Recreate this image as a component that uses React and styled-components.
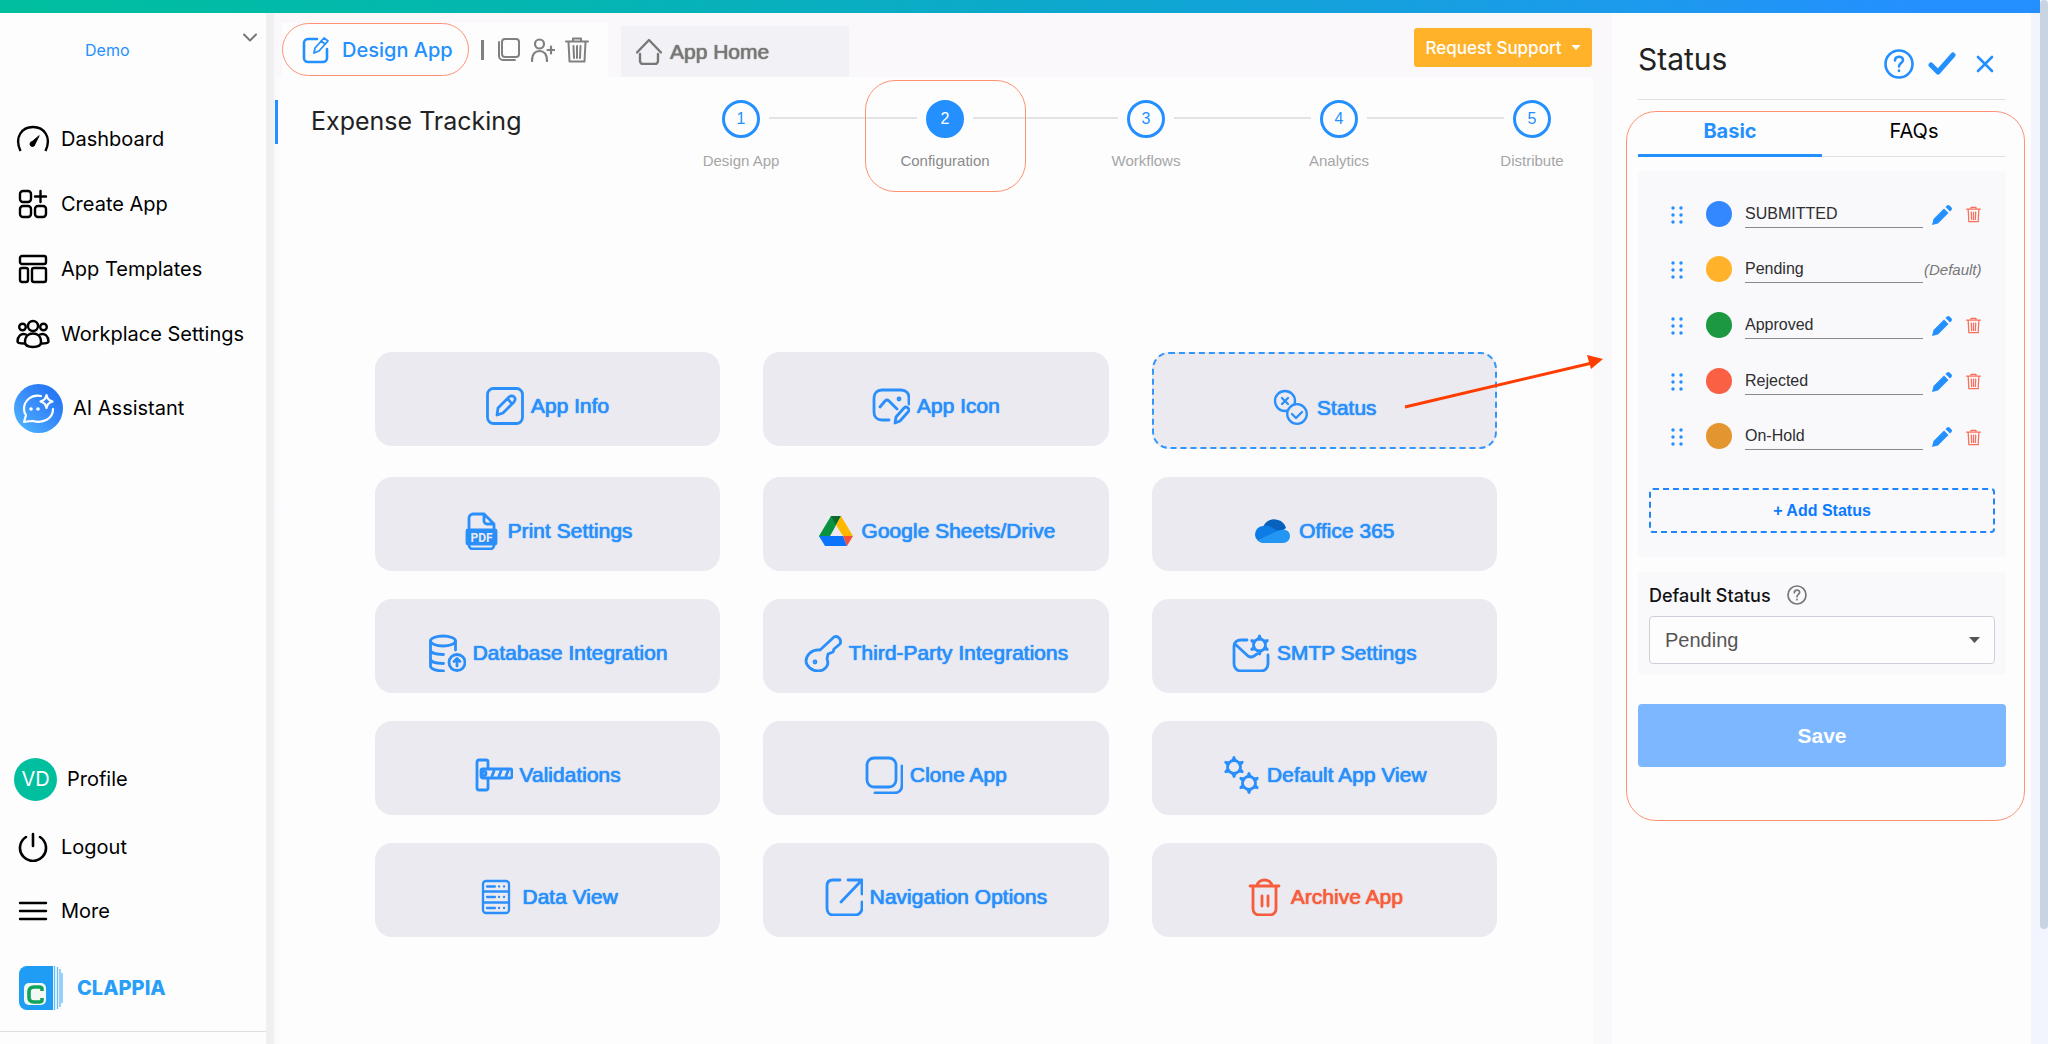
import React from "react";
import styled, { createGlobalStyle, css } from "styled-components";

const blue = "#2490ff";
const accent = "#ff9275";
const ui = `Inter, "Liberation Sans", sans-serif`;
const helv = `"Liberation Sans", Arial, sans-serif`;

const Global = createGlobalStyle`
  *, *::before, *::after { box-sizing: border-box; }
  body { margin: 0; background: #fdfdfe; font-family: ${ui}; color: #000; }
  button, input, select { font: inherit; color: inherit; margin: 0; }
  button { background: none; border: 0; padding: 0; cursor: pointer; }
  a { color: inherit; text-decoration: none; }
  svg { display: block; }
  ul, ol { list-style: none; margin: 0; padding: 0; }
  h1, h2 { margin: 0; font-weight: 400; }
`;

/* ---------- shell ---------- */
const Page = styled.div`
  display: flex;
  min-height: 100vh;
  background: #f2f5fd;
`;
const Shell = styled.div`
  flex: 1;
  min-width: 0;
  display: flex;
  flex-direction: column;
`;
const TopBar = styled.div`
  height: 13px;
  background: linear-gradient(90deg, #00bf9f 0%, #04b5b2 28%, #10a5d4 58%, #1c9aec 80%, #2490ff 94%);
`;
const Columns = styled.div`
  flex: 1;
  display: flex;
  padding-right: 9px;
`;
const ScrollThumb = styled.div`
  width: 8px;
  height: 89vh;
  border-radius: 4px;
  background: #c9d4e3;
`;
const Icon = styled.svg`
  flex: none;
  fill: none;
  stroke: currentColor;
  stroke-linecap: round;
  stroke-linejoin: round;
  stroke-width: ${(p) => p.$w || 2};
`;

/* ---------- sidebar ---------- */
const Sidebar = styled.aside`
  flex: none;
  width: 274px;
  display: flex;
  flex-direction: column;
  background: #fdfdfe;
  border-right: 8px solid #f0eff2;
  padding-bottom: 12px;
`;
const Workspace = styled.div`
  display: flex;
  justify-content: space-between;
  align-items: flex-start;
  height: 93px;
  padding: 20px 9px 0 85px;
  color: #777;
`;
const WorkspaceName = styled.a`
  margin-top: 5px;
  font-size: 16px;
  line-height: 24px;
  color: ${blue};
`;
const NavLink = styled.a`
  display: flex;
  align-items: center;
  gap: 10px;
  height: ${(p) => p.$h || 65}px;
  padding-left: 14px;
  font-size: 20px;
  line-height: 24px;
`;
const NavIcon = styled.span`
  display: flex;
  justify-content: center;
  min-width: 37px;
`;
const Avatar = styled.span`
  display: grid;
  place-items: center;
  width: 43px;
  height: 43px;
  border-radius: 50%;
  background: #00bf9f;
  color: #fff;
  font-size: 20px;
`;
const SideFooter = styled.div`
  margin-top: auto;
`;
const Brand = styled.a`
  display: flex;
  align-items: center;
  gap: 14px;
  height: 91px;
  padding: 4px 0 0 19px;
  border-bottom: 1px solid #dfdfe1;
  font: 800 20px/24px ${ui};
  color: #279ff8;
`;

/* ---------- main ---------- */
const Main = styled.main`
  flex: 1;
  min-width: 0;
  background: linear-gradient(90deg, #faf8fb, #fdfdfe) 0 0 / 9px 100% no-repeat,
    linear-gradient(#f9f8fb, #f9f8fb) 100% 0 / 19px 100% no-repeat, #fdfdfe;
`;
const Toolbar = styled.header`
  display: flex;
  align-items: flex-end;
  height: 64px;
  background: #faf8fb;
  padding: 0 20px 0 8px;
`;
const DesignTab = styled.div`
  display: flex;
  align-items: flex-start;
  width: 326px;
  height: 54px;
  background: #fdfdfe;
  color: #808080;
`;
const DesignLink = styled.a`
  display: flex;
  align-items: center;
  gap: 12px;
  width: 187px;
  height: 53px;
  padding-left: 19px;
  border: 1px solid ${accent};
  border-radius: 27px;
  color: ${blue};
  font-size: 20px;
  font-weight: 500;
`;
const ToolButtons = styled.div`
  display: flex;
  align-items: center;
  height: 53px;
  gap: 10px;
  padding-left: 12px;
`;
const Separator = styled.span`
  width: 3px;
  height: 20px;
  margin-right: 3px;
  background: #808080;
`;
const ToolButton = styled.button`
  display: grid;
  place-items: center;
  width: 24px;
  height: 26px;
`;
const HomeTab = styled.a`
  display: flex;
  align-items: center;
  gap: 8px;
  width: 228px;
  height: 51px;
  margin-left: 13px;
  padding-left: 15px;
  background: #f2f1f5;
  color: #777;
  font: 21px/24px ${helv};
  text-shadow: 0 0 1px #777, 0 0 1px #999;
`;
const Support = styled.button`
  display: flex;
  align-items: center;
  justify-content: center;
  gap: 9px;
  width: 178px;
  height: 39px;
  margin: 0 0 10px auto;
  border-radius: 3px;
  background: #ffb22a;
  color: #fff;
  font-size: 17px;
  font-weight: 500;
`;
const SubHeader = styled.div`
  display: flex;
  align-items: flex-start;
  padding: 23px 61px 0 1px;
`;
const Title = styled.h1`
  flex: none;
  height: 44px;
  padding-left: 33px;
  border-left: 3px solid ${blue};
  font-size: 25px;
  line-height: 42px;
  color: #222;
`;
const Steps = styled.ol`
  flex: 1;
  display: flex;
  max-width: 829px;
  margin-left: auto;
`;
const StepItem = styled.li`
  display: flex;
  flex: ${(p) => (p.$grow ? `${p.$grow} 1 0` : "none")};
`;
const Step = styled.a`
  position: relative;
  display: flex;
  flex-direction: column;
  align-items: center;
  width: 38px;
`;
const StepDot = styled.span`
  display: grid;
  place-items: center;
  flex: none;
  width: 38px;
  height: 38px;
  border: 3px solid ${blue};
  border-radius: 50%;
  background: ${(p) => (p.$on ? blue : "#fdfdfe")};
  color: ${(p) => (p.$on ? "#fff" : blue)};
  font: 16px/20px ${helv};
`;
const StepLabel = styled.span`
  margin-top: 13px;
  font: 15px/20px ${helv};
  white-space: nowrap;
  color: ${(p) => (p.$on ? "#8a8a8a" : "#a6a6a6")};
`;
const StepLine = styled.span`
  flex: 1;
  height: 2px;
  margin: 17px 9px 0;
  background: #e3e3e6;
`;
const StepFrame = styled.span`
  position: absolute;
  top: -20px;
  left: 50%;
  width: 161px;
  height: 112px;
  margin-left: -80px;
  border: 1px solid ${accent};
  border-radius: 30px;
  pointer-events: none;
`;
const CardGrid = styled.div`
  display: grid;
  grid-template-columns: repeat(3, 1fr);
  align-items: start;
  gap: 28px 43px;
  padding: 181px 115px 40px 101px;
`;
const CardCell = styled.div`
  position: relative;
`;
const Card = styled.button`
  display: flex;
  align-items: center;
  justify-content: center;
  gap: 7px;
  width: 100%;
  height: 94px;
  padding-top: 14px;
  border-radius: 17px;
  background: #ebeaf0;
  font: 21px/24px ${helv};
  color: ${(p) => (p.$danger ? "#f75d3c" : "#2a8ffb")};
  text-shadow: 0 0 1px currentColor, 0 0 1px currentColor;
  ${(p) =>
    p.$active &&
    css`
      height: 97px;
      border: 2px dashed #3396fb;
    `}
`;
const Arrow = styled.svg`
  position: absolute;
  left: 252px;
  top: 0;
  pointer-events: none;
`;

/* ---------- side panel ---------- */
const Panel = styled.aside`
  flex: none;
  width: 419px;
  background: #fdfdfe;
`;
const PanelHead = styled.div`
  display: flex;
  align-items: center;
  justify-content: space-between;
  height: 87px;
  margin: 0 25px 0 26px;
  padding: 6px 6px 0 0;
  border-bottom: 1px solid #dde0e5;
`;
const PanelTitle = styled.h2`
  font-size: 30px;
  line-height: 36px;
  color: #222;
`;
const PanelActions = styled.div`
  display: flex;
  align-items: center;
  gap: 13px;
  padding-top: 10px;
  color: ${blue};
`;
const ActionButton = styled.button`
  display: grid;
  place-items: center;
  width: 30px;
  height: 30px;
`;
const PanelFrame = styled.div`
  margin: 11px 6px 0 14px;
  padding: 0 18px 53px 11px;
  border: 1px solid ${accent};
  border-radius: 30px;
`;
const Tabs = styled.div`
  display: flex;
`;
const Tab = styled.button`
  flex: 1;
  height: 45px;
  padding-bottom: ${(p) => (p.$on ? 4 : 6)}px;
  border-bottom: ${(p) => (p.$on ? `3px solid ${blue}` : "1px solid #dde0e5")};
  color: ${(p) => (p.$on ? blue : "#000")};
  font-size: 20px;
  font-weight: ${(p) => (p.$on ? 700 : 400)};
`;
const Box = styled.section`
  margin-top: ${(p) => p.$top}px;
  padding: ${(p) => p.$pad};
  border-radius: 4px;
  background: #f9f8fb;
`;
const StatusList = styled.ul`
  display: grid;
  grid-template-columns: minmax(0, 1fr);
  grid-auto-rows: 1fr;
  height: 278px;
`;
const StatusRow = styled.li`
  display: flex;
  align-items: center;
  padding: 0 14px 0 22px;
`;
const DragHandle = styled.button`
  padding-top: 2px;
  color: ${blue};
`;
const Swatch = styled.button`
  flex: none;
  width: 26px;
  height: 26px;
  margin: 0 13px 0 23px;
  border-radius: 50%;
  background: ${(p) => p.$color};
`;
const StatusInput = styled.input`
  flex: 1;
  min-width: 0;
  height: 28px;
  padding: 1px 0 0;
  border: 0;
  border-bottom: 1px solid #8a898c;
  border-radius: 0;
  background: transparent;
  outline: 0;
  font: 16px/20px ${helv};
  color: #2e2e30;
`;
const RowEnd = styled.div`
  display: flex;
  align-items: center;
  justify-content: space-between;
  flex: none;
  width: 58px;
  padding-top: 2px;
  padding-left: ${(p) => (p.$text ? 1 : 9)}px;
  font: italic 15px/20px ${helv};
  color: #777;
`;
const IconButton = styled.button`
  color: ${(p) => p.$color};
`;
const AddStatus = styled.button`
  width: 100%;
  height: 45px;
  margin-top: 24px;
  border: 2px dashed #2086ff;
  border-radius: 4px;
  font: 700 16px/20px ${helv};
  color: #0a7aff;
`;
const FieldHead = styled.div`
  display: flex;
  align-items: center;
  gap: 16px;
  height: 24px;
  margin-bottom: 9px;
  font-size: 18px;
  color: #777;
`;
const FieldLabel = styled.label`
  font-weight: 500;
  color: #111;
`;
const SelectWrap = styled.div`
  display: grid;
  align-items: center;
  justify-items: end;
  color: #555;

  & > * { grid-area: 1 / 1; }
  & > svg { margin-right: 15px; pointer-events: none; }
`;
const Select = styled.select`
  width: 100%;
  height: 48px;
  padding: 0 15px;
  appearance: none;
  border: 1px solid #cbd0d9;
  border-radius: 4px;
  background: #fdfdfe;
  font: 20px/24px ${helv};
  color: #555;
`;
const Save = styled.button`
  width: 100%;
  height: 63px;
  margin-top: 29px;
  border-radius: 4px;
  background: #7cb7ff;
  color: #fff;
  font: 700 21px/24px ${helv};
`;

/* ---------- icons ---------- */
const Caret = ({ w = 11, h = 6 }) => (
  <svg width={w} height={h} viewBox="0 0 11 6" aria-hidden="true">
    <path d="M0 0h11L5.500 6z" fill="currentColor" />
  </svg>
);
const Chevron = () => (
  <Icon width="14" height="9" viewBox="0 0 14 9">
    <path d="M1 1.500l6 6 6-6" />
  </Icon>
);
const DashboardIcon = () => (
  <Icon width="34" height="34" viewBox="0 0 34 34" $w={2.4}>
    <path d="M4.500 29C-2 15 6 5 17 5s19 10 12.500 24" strokeLinecap="butt" />
    <path d="M23 14l-4 8a2.500 2.500 0 1 1-3-2.500z" fill="currentColor" strokeWidth="1" />
  </Icon>
);
const CreateIcon = () => (
  <Icon width="30" height="30" viewBox="0 0 30 30" $w={2.4}>
    <rect x="2" y="2" width="11" height="11" rx="3" />
    <rect x="2" y="17" width="11" height="11" rx="3" />
    <rect x="17" y="17" width="11" height="11" rx="3" />
    <path d="M22.500 2v11M17 7.500h11" />
  </Icon>
);
const TemplatesIcon = () => (
  <Icon width="30" height="30" viewBox="0 0 30 30" $w={2.4}>
    <rect x="2" y="2" width="26" height="8" rx="2" />
    <rect x="2" y="14" width="8" height="14" rx="2" />
    <rect x="14" y="14" width="14" height="14" rx="2" />
  </Icon>
);
const TeamIcon = () => (
  <Icon width="34" height="30" viewBox="0 0 34 30" $w={2.4}>
    <circle cx="17" cy="7" r="5" />
    <circle cx="6.500" cy="8" r="3.300" />
    <circle cx="27.500" cy="8" r="3.300" />
    <path d="M9 23c0-6 4-8.500 8-8.500s8 2.500 8 8.500c0 3-3 5-8 5s-8-2-8-5z" />
    <path d="M10 15.500c-5-2-8.500 2-8.500 7 0 1.500 2 2 7 2M24 15.500c5-2 8.500 2 8.500 7 0 1.500-2 2-7 2" />
  </Icon>
);
const AssistantIcon = () => (
  <svg width="49" height="49" viewBox="0 0 49 49" aria-hidden="true">
    <defs>
      <linearGradient id="ai" x1="0" y1="1" x2="1" y2="0">
        <stop offset="0" stopColor="#4fbcff" />
        <stop offset="0.500" stopColor="#3a8dfb" />
        <stop offset="1" stopColor="#1a6cf0" />
      </linearGradient>
    </defs>
    <circle cx="24.500" cy="24.500" r="24.500" fill="url(#ai)" />
    <g fill="none" stroke="#fff" strokeWidth="2.200" strokeLinejoin="round" strokeLinecap="round">
      <path d="M27 12c-10-2-17 5-17 13 0 3 1 5 2 6l-2 7c5-1 7-1 9-1 11 3 20-3 20-12" />
      <path d="M32.500 11c1 4 2 5 6 6.500-4 1.500-5 2.500-6 6.500-1-4-2-5-6-6.500 4-1.500 5-2.500 6-6.500z" />
    </g>
    <g fill="#fff">
      <circle cx="17" cy="25" r="1.800" />
      <circle cx="24" cy="25" r="1.800" />
    </g>
  </svg>
);
const PowerIcon = () => (
  <Icon width="30" height="30" viewBox="0 0 30 30" $w={2.6}>
    <path d="M15 2v12M8 5a13 13 0 1 0 14 0" />
  </Icon>
);
const MenuIcon = () => (
  <Icon width="30" height="24" viewBox="0 0 30 24" $w={2.4}>
    <path d="M2 4h26M2 12h26M2 20h26" />
  </Icon>
);
const BrandIcon = () => (
  <svg width="44" height="44" viewBox="0 0 44 44" aria-hidden="true">
    <path d="M8 0h26v44H8a8 8 0 0 1-8-8V8a8 8 0 0 1 8-8z" fill="#1f9df5" />
    <path d="M35.500 0v44M38.500 1v42M41 3v38M43 7v30" stroke="#6cbcf8" strokeWidth="1.400" />
    <rect x="5" y="17" width="22" height="22" rx="5" fill="#f2f8f4" />
    <path d="M23 25v-2q0-2-3-2h-5q-5 0-5 5v5q0 5 5 5h5q3 0 3-2v-2" fill="none" stroke="#0fa35c" strokeWidth="3.600" />
  </svg>
);
const EditIcon = () => (
  <Icon width="28" height="28" viewBox="0 0 28 28" $w={2.6}>
    <path d="M15 3H6a4 4 0 0 0-4 4v15a4 4 0 0 0 4 4h15a4 4 0 0 0 4-4V13" />
    <path d="M12 17l1-5 9-10 4 3-9 10zM19 5l4 3" strokeWidth="1.800" />
  </Icon>
);
const CopyIcon = () => (
  <Icon width="22" height="25" viewBox="0 0 22 25">
    <rect x="4" y="2" width="17" height="18" rx="3" />
    <path d="M1 5v14a4 4 0 0 0 4 4h12" />
  </Icon>
);
const UserPlusIcon = () => (
  <Icon width="24" height="24" viewBox="0 0 24 24" $w={2.2}>
    <circle cx="8.500" cy="6" r="4.500" />
    <path d="M1 23c0-7 3-10 7.500-10S16 16 16 23M20 8.500v7M16.500 12h7" />
  </Icon>
);
const TrashIcon = ({ w = 24, h = 26 }) => (
  <Icon width={w} height={h} viewBox="0 0 24 26">
    <path d="M1 4.500h22M8 4V1.500h8V4M3.500 5l1 19.500h15L20.500 5M8.500 9l.5 12M12 9v12M15.500 9l-.5 12" />
  </Icon>
);
const HomeIcon = () => (
  <Icon width="26" height="27" viewBox="0 0 26 27" $w={2.4}>
    <path d="M1 14.500L13 2l12 12.500M4 16v7a3 3 0 0 0 3 3h12a3 3 0 0 0 3-3v-7" />
  </Icon>
);
const HelpIcon = ({ s = 30, w = 2 }) => (
  <Icon width={s} height={s} viewBox="0 0 30 30" $w={w}>
    <circle cx="15" cy="15" r="13.500" />
    <path d="M11 11.500c0-5 8-5 8-.5 0 3-4 3-4 6.500" />
    <path d="M15 21.500v.5" />
  </Icon>
);
const PencilIcon = () => (
  <svg width="20" height="20" viewBox="0 0 20 20" aria-hidden="true">
    <path d="M0 20l1.500-6L12 3.500 16.500 8 6 18.500zM13.500 2l1.500-1.500a2 2 0 0 1 2.500 0l2 2a2 2 0 0 1 0 2.500L18 6.500z" fill="currentColor" />
  </svg>
);
const DragIcon = () => (
  <svg width="12" height="18" viewBox="0 0 12 18" aria-hidden="true">
    {[2, 9, 16].map((y) => (
      <g key={y} fill="currentColor">
        <circle cx="2" cy={y} r="1.700" />
        <circle cx="10" cy={y} r="1.700" />
      </g>
    ))}
  </svg>
);
const gear = (x, y, r) => (
  <g>
    <circle cx={x} cy={y} r={r} />
    {[0, 60, 120, 180, 240, 300].map((a) => (
      <path key={a} d={`M${x - 1} ${y - r}L${x} ${y - r - 3}L${x + 1} ${y - r}`} transform={`rotate(${a} ${x} ${y})`} />
    ))}
  </g>
);
const icons = {
  info: (
    <>
      <rect x="1.500" y="1.500" width="35" height="35" rx="6" />
      <path d="M11 28l1-7 11-11c4-3 8 1 5 5L17 26zM22 12l4 5" />
    </>
  ),
  picture: (
    <>
      <path d="M17 33h-7c-5 0-8-3-8-8V11c0-5 3-8 8-8h19c5 0 8 3 8 8v6M8 20l5-6q2-2 4 0l8 8" />
      <circle cx="27" cy="12" r="1" />
      <path d="M23 36l1-6 8-9q2-2 4 0t0 4l-8 9z" />
    </>
  ),
  pdf: (
    <>
      <path d="M6 18V6a4 4 0 0 1 4-4h11l10 10v6M21 2v7a3 3 0 0 0 3 3h7M6 31v2a4 4 0 0 0 4 4h17a4 4 0 0 0 4-4v-2" />
      <rect x="4" y="18" width="29" height="14" rx="1" fill="currentColor" />
      <text x="18.500" y="30" textAnchor="middle" fill="#ebeaf0" stroke="none" fontFamily="Roboto, sans-serif" fontWeight="700" fontSize="12">PDF</text>
    </>
  ),
  drive: (
    <g stroke="none">
      <path d="M14 4h10l-5 9-10 21-7-10z" fill="#0a9240" />
      <path d="M14 4h10l-5 9z" fill="#0b6b2d" />
      <path d="M24 4l12 20H26l-7-11z" fill="#ffb800" />
      <path d="M2 24h24l4 10H8z" fill="#0b74ff" />
      <path d="M26 24h10l-6 10z" fill="#f4513a" />
      <path d="M19 14l6 10H13z" fill="#ebeaf0" />
    </g>
  ),
  cloud: (
    <g stroke="none">
      <path d="M9 15c3-7 9-9 15-7 4 1 7 4 8 8l-11 9z" fill="#0862bd" />
      <path d="M10 31A8 8 0 0 1 9 14c4-1 6 0 8 1l9 5-4 9z" fill="#0c7be4" />
      <path d="M4 28l17-8c7-4 15-3 15 4 0 4-3 7-7 7H10q-4 0-6-3z" fill="#2396f3" />
    </g>
  ),
  status: (
    <>
      <circle cx="13" cy="12" r="10" />
      <circle cx="25" cy="25" r="9.800" fill="#ebeaf0" />
      <path d="M10 9l6 6M16 9l-6 6M20 25l4 4 6-6" />
    </>
  ),
  database: (
    <>
      <ellipse cx="15" cy="7" rx="12.500" ry="5" />
      <path d="M2.500 7v25c0 3 6 5 13 5M27.500 7v9M2.500 16c0 3 6 4.500 13 4.500M2.500 25c0 3 6 4.500 13 4.500" />
      <circle cx="29" cy="28.500" r="8" />
      <path d="M29 32v-7M26 27.500l3-3 3 3" />
    </>
  ),
  key: (
    <>
      <path d="M16 16L30 3c4-2 8 3 6 7l-6 5-1 3-5 2-1 5c3 7-3 12-9 12S2 32 2 27s5-12 14-11z" />
      <circle cx="11" cy="28" r="1" />
    </>
  ),
  mail: (
    <>
      <path d="M15 6H9c-4 0-7 2-7 6v18c0 4 3 7 7 7h20c4 0 7-3 7-7v-9M3 10l13 12q3 2 6 0l3-2" />
      {gear(27.5, 11, 6)}
    </>
  ),
  barrier: (
    <>
      <rect x="2" y="4" width="11" height="30" rx="2" />
      <rect x="6" y="13" width="31" height="9" rx="2" fill="#ebeaf0" />
      <circle cx="9" cy="17.500" r="2" />
      <path d="M17 20l2-5M24 20l2-5M31 20l2-5" />
    </>
  ),
  clone: (
    <>
      <rect x="2" y="2" width="29" height="29" rx="7" />
      <path d="M37 10v19c0 5-3 8-8 8H10" />
    </>
  ),
  gears: (
    <>
      {gear(12, 11, 6.5)}
      {gear(27, 27, 6.5)}
    </>
  ),
  table: (
    <>
      <rect x="6" y="3" width="26" height="32" rx="3" />
      <path d="M6 13.500h26M6 24.500h26M10 8.500h8M10 19h8M10 30h8M22 8.500h.1M27 8.500h.1M22 19h.1M27 19h.1M22 30h.1M27 30h.1" />
    </>
  ),
  open: (
    <>
      <path d="M15 2H8C4 2 2 4 2 8v22c0 4 2 7 6 7h22c4 0 7-3 7-7v-6M23 2h14v14M36 3L16 24" />
    </>
  ),
  archive: (
    <>
      <path d="M4 8h29M11 8c1-8 14-8 15 0M7 9v22a6 6 0 0 0 6 6h11a6 6 0 0 0 6-6V9M16 18v10M22 18v10" />
    </>
  ),
};

/* ---------- data ---------- */
const nav = [
  ["Dashboard", DashboardIcon],
  ["Create App", CreateIcon],
  ["App Templates", TemplatesIcon],
  ["Workplace Settings", TeamIcon],
];
const steps = [
  ["Design App", 166],
  ["Configuration", 163],
  ["Workflows", 155],
  ["Analytics", 155],
  ["Distribute", 0],
];
const cards = [
  ["App Info", "info"],
  ["App Icon", "picture"],
  ["Status", "status"],
  ["Print Settings", "pdf"],
  ["Google Sheets/Drive", "drive"],
  ["Office 365", "cloud"],
  ["Database Integration", "database"],
  ["Third-Party Integrations", "key"],
  ["SMTP Settings", "mail"],
  ["Validations", "barrier"],
  ["Clone App", "clone"],
  ["Default App View", "gears"],
  ["Data View", "table"],
  ["Navigation Options", "open"],
  ["Archive App", "archive"],
];
const statuses = [
  ["SUBMITTED", "#3388ff"],
  ["Pending", "#ffb22a"],
  ["Approved", "#1b9840"],
  ["Rejected", "#f96044"],
  ["On-Hold", "#e39530"],
];

export default function App() {
  return (
    <Page>
      <Global />
      <Shell>
        <TopBar />
        <Columns>
          <Sidebar>
            <Workspace>
              <WorkspaceName href="#demo">Demo</WorkspaceName>
              <button aria-label="Switch workplace"><Chevron /></button>
            </Workspace>
            <nav>
              {nav.map(([label, Glyph]) => (
                <NavLink key={label} href="#nav">
                  <NavIcon><Glyph /></NavIcon>
                  {label}
                </NavLink>
              ))}
              <NavLink href="#assistant" $h={84}>
                <NavIcon><AssistantIcon /></NavIcon>
                AI Assistant
              </NavLink>
            </nav>
            <SideFooter>
              <NavLink href="#profile" $h={68}><Avatar>VD</Avatar>Profile</NavLink>
              <NavLink href="#logout" $h={68}><NavIcon><PowerIcon /></NavIcon>Logout</NavLink>
              <NavLink href="#more" $h={60}><NavIcon><MenuIcon /></NavIcon>More</NavLink>
              <Brand href="#home"><BrandIcon />CLAPPIA</Brand>
            </SideFooter>
          </Sidebar>

          <Main>
            <Toolbar>
              <DesignTab>
                <DesignLink href="#design"><EditIcon />Design App</DesignLink>
                <ToolButtons>
                  <Separator />
                  <ToolButton aria-label="Duplicate"><CopyIcon /></ToolButton>
                  <ToolButton aria-label="Add user"><UserPlusIcon /></ToolButton>
                  <ToolButton aria-label="Delete"><TrashIcon /></ToolButton>
                </ToolButtons>
              </DesignTab>
              <HomeTab href="#app-home"><HomeIcon />App Home</HomeTab>
              <Support>Request Support<Caret w={10} h={5} /></Support>
            </Toolbar>

            <SubHeader>
              <Title>Expense Tracking</Title>
              <Steps>
                {steps.map(([label, grow], i) => (
                  <React.Fragment key={label}>
                    <StepItem>
                      <Step href="#step" aria-current={i === 1 ? "step" : undefined}>
                        <StepDot $on={i === 1}>{i + 1}</StepDot>
                        <StepLabel $on={i === 1}>{label}</StepLabel>
                        {i === 1 && <StepFrame />}
                      </Step>
                    </StepItem>
                    {grow > 0 && <StepItem $grow={grow} aria-hidden="true"><StepLine /></StepItem>}
                  </React.Fragment>
                ))}
              </Steps>
            </SubHeader>

            <CardGrid>
              {cards.map(([label, icon]) => (
                <CardCell key={label}>
                  <Card $active={icon === "status"} $danger={icon === "archive"}>
                    <Icon width="38" height="38" viewBox="0 0 38 38" $w={icon === "status" || icon === "table" ? 2.3 : 2.8}>
                      {icons[icon]}
                    </Icon>
                    {label}
                  </Card>
                  {icon === "status" && (
                    <Arrow width="200" height="60" viewBox="0 0 200 60" aria-hidden="true">
                      <path d="M1 55L188 11" stroke="#ff3d00" strokeWidth="3" />
                      <path d="M199 7l-16-4 4 14z" fill="#ff3d00" />
                    </Arrow>
                  )}
                </CardCell>
              ))}
            </CardGrid>
          </Main>

          <Panel>
            <PanelHead>
              <PanelTitle>Status</PanelTitle>
              <PanelActions>
                <ActionButton aria-label="Help"><HelpIcon w={2.6} /></ActionButton>
                <ActionButton aria-label="Apply">
                  <Icon width="28" height="24" viewBox="0 0 28 24" $w={5}><path d="M3 13l7 7L25 3" /></Icon>
                </ActionButton>
                <ActionButton aria-label="Close">
                  <Icon width="18" height="18" viewBox="0 0 18 18" $w={2.6}><path d="M2 2l14 14M16 2L2 16" /></Icon>
                </ActionButton>
              </PanelActions>
            </PanelHead>
            <PanelFrame>
              <Tabs role="tablist">
                <Tab role="tab" aria-selected="true" $on>Basic</Tab>
                <Tab role="tab" aria-selected="false">FAQs</Tab>
              </Tabs>
              <Box $top={14} $pad="15px 11px 24px">
                <StatusList>
                  {statuses.map(([name, color]) => (
                    <StatusRow key={name}>
                      <DragHandle aria-label={`Move ${name}`}><DragIcon /></DragHandle>
                      <Swatch $color={color} aria-label={`${name} colour`} />
                      <StatusInput aria-label="Status name" defaultValue={name} />
                      {name === "Pending" ? (
                        <RowEnd $text>(Default)</RowEnd>
                      ) : (
                        <RowEnd>
                          <IconButton $color={blue} aria-label={`Edit ${name}`}><PencilIcon /></IconButton>
                          <IconButton $color="#f9705a" aria-label={`Delete ${name}`}><TrashIcon w={15} h={17} /></IconButton>
                        </RowEnd>
                      )}
                    </StatusRow>
                  ))}
                </StatusList>
                <AddStatus>+ Add Status</AddStatus>
              </Box>
              <Box $top={15} $pad="11px">
                <FieldHead>
                  <FieldLabel htmlFor="default-status">Default Status</FieldLabel>
                  <HelpIcon s={20} w={2.6} />
                </FieldHead>
                <SelectWrap>
                  <Select id="default-status" defaultValue="Pending">
                    {statuses.map(([name]) => <option key={name}>{name}</option>)}
                  </Select>
                  <Caret />
                </SelectWrap>
              </Box>
              <Save>Save</Save>
            </PanelFrame>
          </Panel>
        </Columns>
      </Shell>
      <ScrollThumb />
    </Page>
  );
}
